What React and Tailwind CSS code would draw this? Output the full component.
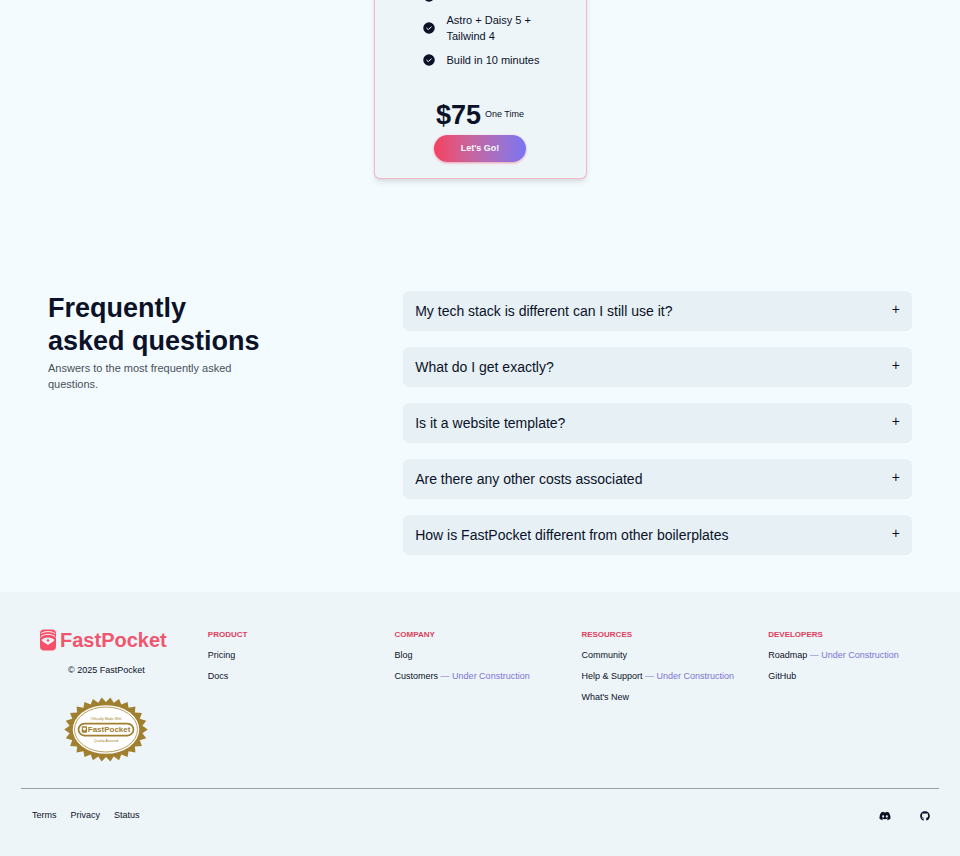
import { FaDiscord, FaGithub } from "react-icons/fa";

const features = ["", "Astro + Daisy 5 + Tailwind 4", "Build in 10 minutes"];

const questions = [
  "My tech stack is different can I still use it?",
  "What do I get exactly?",
  "Is it a website template?",
  "Are there any other costs associated",
  "How is FastPocket different from other boilerplates"
];

const footerColumns = [
  { title: "Product", links: [{ label: "Pricing" }, { label: "Docs" }] },
  { title: "Company", links: [{ label: "Blog" }, { label: "Customers", soon: true }] },
  {
    title: "Resources",
    links: [{ label: "Community" }, { label: "Help & Support", soon: true }, { label: "What's New" }]
  },
  { title: "Developers", links: [{ label: "Roadmap", soon: true }, { label: "GitHub" }] }
];

// Zigzag edge of the seal, the sin term keeps the teeth evenly spaced on the ellipse
const TEETH = 26;
const sealPoints = Array.from({ length: TEETH * 2 }, (_, i) => {
  const turn = (i * Math.PI) / TEETH;
  const angle = turn + 0.065 * Math.sin(2 * turn);
  const rx = i % 2 === 0 ? 167 : 147;
  const ry = i % 2 === 0 ? 129 : 110;
  return `${(168 + rx * Math.cos(angle)).toFixed(1)},${(130 + ry * Math.sin(angle)).toFixed(1)}`;
}).join(" ");

function CheckIcon() {
  return (
    <svg viewBox="0 0 24 24" className="size-3 shrink-0" aria-hidden="true">
      <circle cx="12" cy="12" r="11.5" fill="#0b1228" />
      <path d="M7.5 12.5l3 2.5 6-5" fill="none" stroke="#eef5f9" strokeWidth="2" strokeLinecap="round" strokeLinejoin="round" />
    </svg>
  );
}

function PocketIcon({ className }) {
  return (
    <svg viewBox="0 0 32 42" className={className} aria-hidden="true">
      <rect width="32" height="42" rx="8" fill="#f9506a" />
      <g fill="none" stroke="#eef5f9" strokeWidth="2">
        <path d="M2 8C8 3 24 3 30 8" />
        <path d="M1 15C7 8 25 8 31 15" />
      </g>
      <path d="M3 21C8 14 24 14 29 21C26 25 20 28 16 31C12 28 6 25 3 21Z" fill="#eef5f9" />
      <circle cx="16" cy="22" r="2.5" fill="#f9506a" />
    </svg>
  );
}

function Seal() {
  return (
    <svg viewBox="0 0 336 260" className="h-[65px] w-[84px]" role="img" aria-label="FastPocket seal">
      <polygon points={sealPoints} fill="#a07f2f" />
      <ellipse cx="168" cy="130" rx="133" ry="97" fill="#fff" />
      <ellipse cx="168" cy="130" rx="126" ry="90" fill="none" stroke="#a07f2f" strokeWidth="3" />
      <rect x="58" y="106" width="220" height="48" rx="24" fill="#fff" stroke="#a07f2f" strokeWidth="7" />
      <rect x="71" y="116" width="21" height="27" rx="5" fill="#a07f2f" />
      <path d="M74 128c4-7 11-7 15 0l-7 7z" fill="#fff" />
      <path d="M74 121c4-3 11-3 15 0" fill="none" stroke="#fff" strokeWidth="2" />
      <g fill="#a07f2f" fontFamily="Liberation Sans, sans-serif">
        <text x="168" y="91" fontSize="14" textAnchor="middle">Officially Made With</text>
        <text x="95" y="141" fontSize="32" fontWeight="700">FastPocket</text>
        <text x="168" y="181" fontSize="14" textAnchor="middle">Quality Assured</text>
      </g>
    </svg>
  );
}

function PricingCard() {
  return (
    <div className="mx-auto -mt-3 w-[213px] rounded-b-md border border-t-0 border-[#f3b9c6] bg-[#eef5f9] pb-4 shadow-md">
      <ul className="flex flex-col gap-2 pr-8 pl-12 text-[11px] leading-4">
        {features.map((feature, i) => (
          <li key={i} className="flex min-h-4 items-center gap-3">
            <CheckIcon />
            <span>{feature}</span>
          </li>
        ))}
      </ul>
      <div className="mt-[31px] flex items-center justify-center gap-1">
        <span className="text-[27px] leading-8 font-bold">$75</span>
        <span className="text-[9px]">One Time</span>
      </div>
      <div className="mt-1 flex justify-center">
        <button className="h-[27px] w-23 rounded-full bg-linear-to-r from-[#f43f5e] to-[#7874f2] text-[9px] font-bold text-[#f4fbff] shadow-sm shadow-[#f43f5e]/40">
          Let's Go!
        </button>
      </div>
    </div>
  );
}

function Faq() {
  return (
    <section className="mt-28 grid grid-cols-[2fr_3fr] gap-4 px-12 pb-[37px]">
      <div className="pt-px">
        <h2 className="text-[27px] leading-[33px] font-bold">
          Frequently
          <br />
          asked questions
        </h2>
        <p className="mt-0.5 max-w-52 text-[11px] leading-4 text-[#475059]">
          Answers to the most frequently asked questions.
        </p>
      </div>
      <div className="flex flex-col gap-4">
        {questions.map((question) => (
          <button
            key={question}
            className="flex h-10 items-center justify-between rounded-md bg-[#e6f0f5] px-3 text-left text-sm font-medium"
          >
            <span>{question}</span>
            <span className="pb-1 leading-4">+</span>
          </button>
        ))}
      </div>
    </section>
  );
}

function Footer() {
  return (
    <footer className="bg-[#eef5f9] px-[21px] pt-9 pb-9 text-[9px]">
      <div className="grid grid-cols-5 gap-4">
        <div className="flex flex-col items-center">
          <a href="#" className="flex items-center gap-1 pr-1.5 text-xl leading-6 font-bold text-[#f0566e]">
            <PocketIcon className="h-[22px] w-4" />
            FastPocket
          </a>
          <p className="mt-3 leading-3">© 2025 FastPocket</p>
          <div className="mt-[21px]">
            <Seal />
          </div>
        </div>
        {footerColumns.map((column) => (
          <nav key={column.title} className="pt-px">
            <h3 className="text-[8px] leading-3 font-bold text-[#e0405c] uppercase">{column.title}</h3>
            <ul className="mt-2 flex flex-col gap-[9px] leading-3 whitespace-nowrap">
              {column.links.map((link) => (
                <li key={link.label}>
                  <a href="#">
                    {link.label}
                    {link.soon && <span className="text-[#7b74d4]"> — Under Construction</span>}
                  </a>
                </li>
              ))}
            </ul>
          </nav>
        ))}
      </div>
      <div className="mt-[26px] flex items-center justify-between border-t border-[#98a0a8] pt-5 pr-[9px] pl-[11px]">
        <div className="flex gap-[14px]">
          <a href="#">Terms</a>
          <a href="#">Privacy</a>
          <a href="#">Status</a>
        </div>
        <div className="flex items-center gap-[29px]">
          <a href="#" aria-label="Discord">
            <FaDiscord className="size-3" />
          </a>
          <a href="#" aria-label="GitHub">
            <FaGithub className="size-[10px]" />
          </a>
        </div>
      </div>
    </footer>
  );
}

export default function App() {
  return (
    <div className="min-h-screen overflow-hidden bg-[#f4fbff] font-['Liberation_Sans',sans-serif] text-[#0b1228]">
      <PricingCard />
      <Faq />
      <Footer />
    </div>
  );
}
